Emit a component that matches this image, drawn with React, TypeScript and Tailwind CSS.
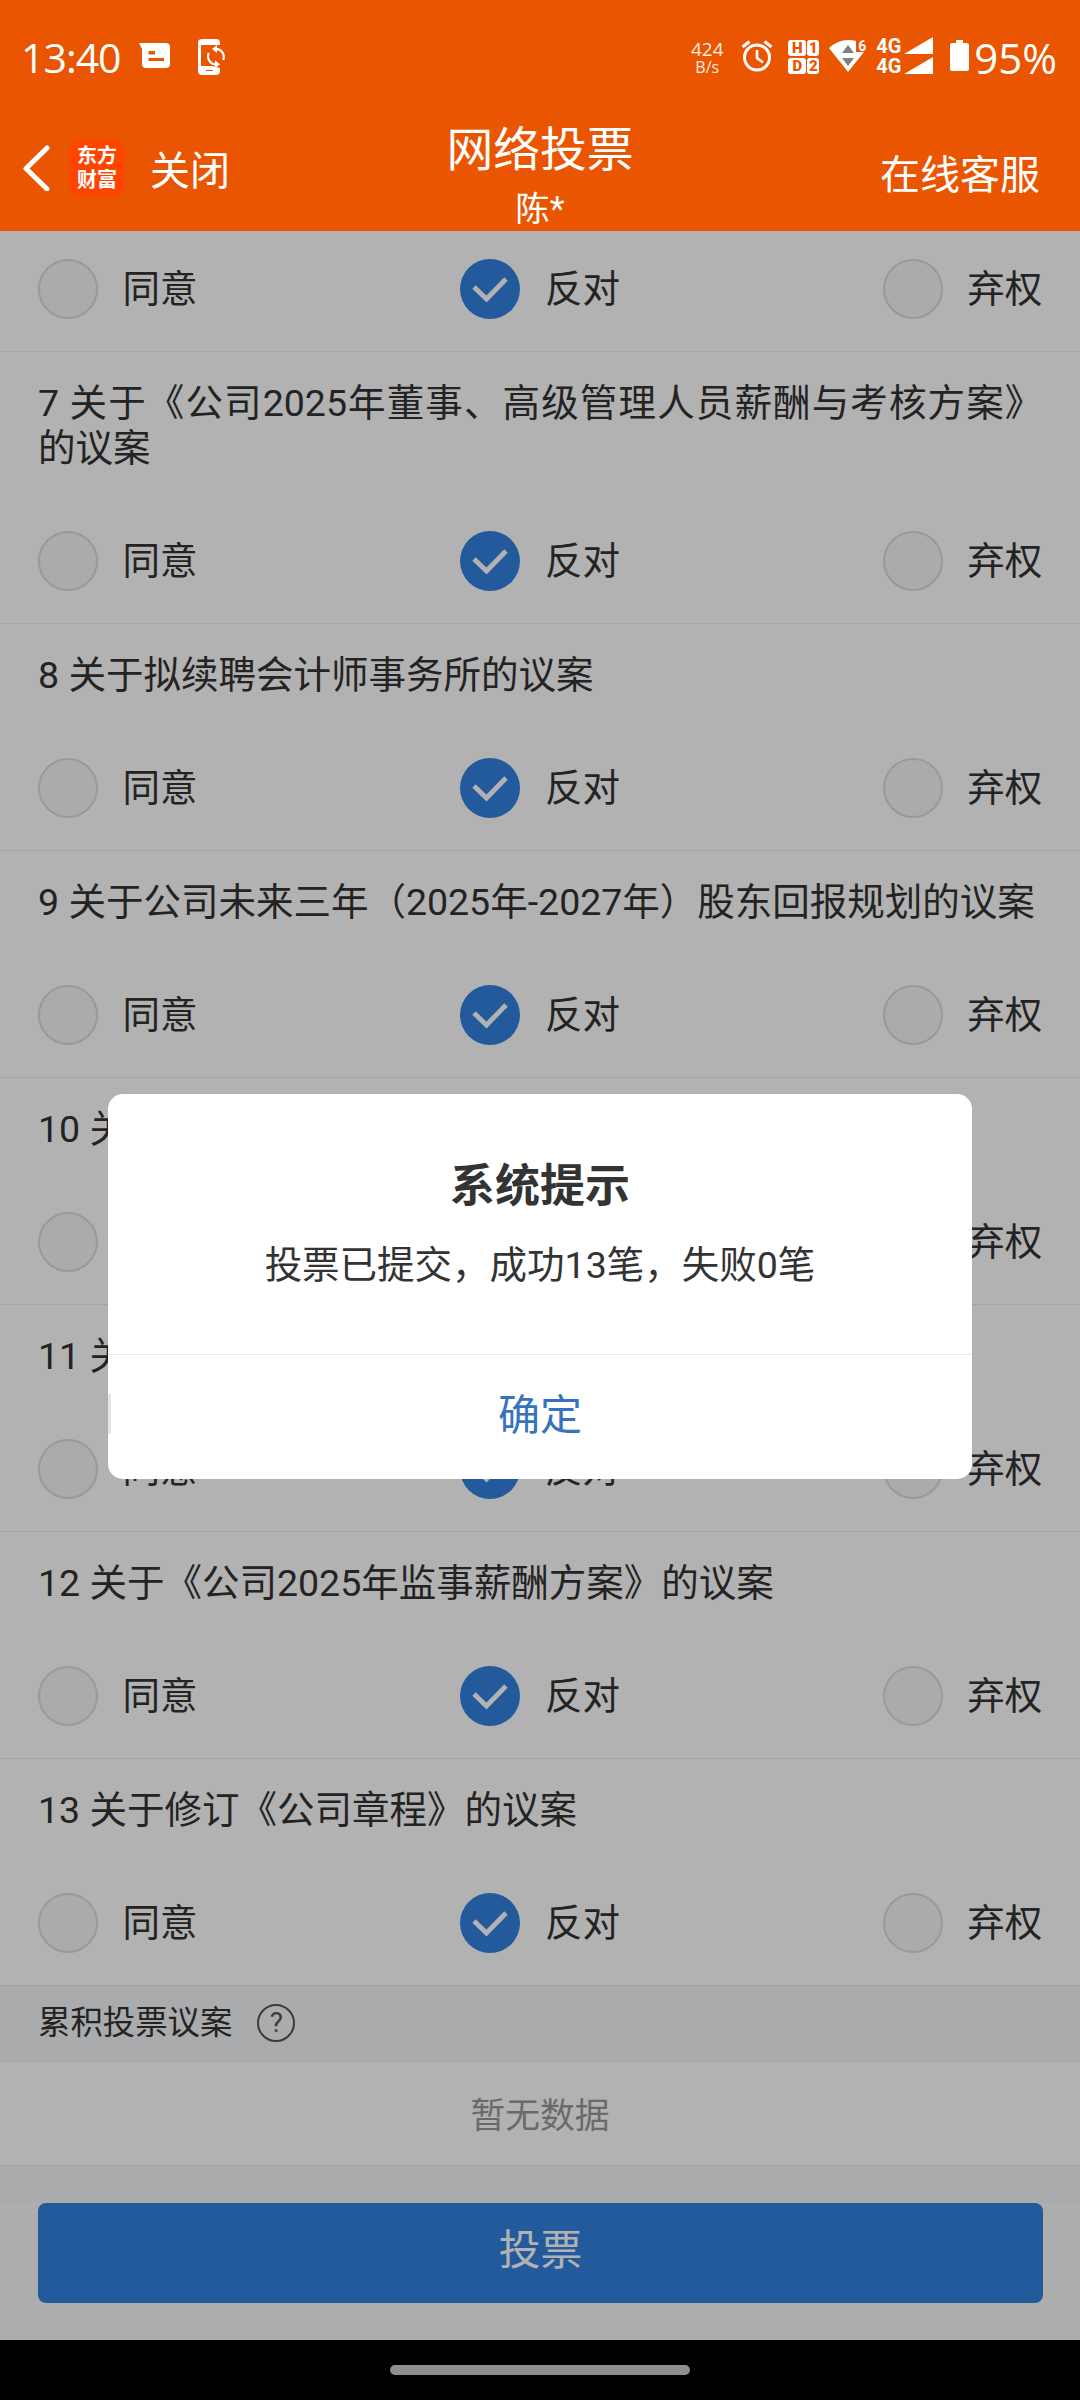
import React, { useState } from 'react';

type Choice = 'agree' | 'against' | 'abstain';

const choices: { key: Choice; label: string }[] = [
  { key: 'agree', label: '同意' },
  { key: 'against', label: '反对' },
  { key: 'abstain', label: '弃权' },
];

const proposals = [
  { id: 7, title: '关于《公司2025年董事、高级管理人员薪酬与考核方案》的议案' },
  { id: 8, title: '关于拟续聘会计师事务所的议案' },
  { id: 9, title: '关于公司未来三年（2025年-2027年）股东回报规划的议案' },
  { id: 10, title: '关于提请股东大会授权的议案' },
  { id: 11, title: '关于制定管理制度的议案' },
  { id: 12, title: '关于《公司2025年监事薪酬方案》的议案' },
  { id: 13, title: '关于修订《公司章程》的议案' },
];

const StatusBar = () => (
  <div className="flex h-[112px] items-center pl-[21px] pr-[23px] text-white">
    <span className="mt-[2px] w-[118px] font-['Open_Sans',sans-serif] text-[41px] leading-none tracking-[-1px]">13:40</span>
    {/* Message */}
    <svg className="h-[26px] w-[31px]" viewBox="0 0 31 26" fill="currentColor">
      <path
        fillRule="evenodd"
        d="M0 0H27Q31 0 31 4V21Q31 25 27 25H7Q3 25 3 21V6ZM9.500 8V11.500H16V8ZM9.500 15V18H25V15Z"
      />
    </svg>
    {/* Phone sync */}
    <svg className="ml-[28px] mt-[2px] h-[36px] w-[28px]" viewBox="0 0 28 36" fill="none">
      <path
        fill="currentColor"
        fillRule="evenodd"
        d="M4 0H18Q22 0 22 4V6H3V27H14L22 29V32Q22 36 18 36H4Q0 36 0 32V4Q0 0 4 0ZM8 31V32H15V31Z"
      />
      <path stroke="currentColor" strokeWidth="2.200" d="M17 10A8 8 0 0 1 25.200 21M19 25.300A8 8 0 0 1 10.800 14" />
      <path fill="currentColor" d="M14 10L19 6V14ZM22 25.300L17 21.300V29.300Z" />
    </svg>
    <div className="ml-auto mt-[3px] flex w-[34px] flex-col items-center font-['Open_Sans',sans-serif] leading-none opacity-90">
      <span className="text-[19px] leading-[19px]">424</span>
      <span className="text-[16px] leading-[16px]">B/s</span>
    </div>
    {/* Alarm */}
    <svg className="ml-[17px] h-[32px] w-[32px]" viewBox="0 0 32 32" fill="none" stroke="currentColor">
      <circle cx="16" cy="17.500" r="12.500" strokeWidth="3" />
      <path strokeWidth="3.200" d="M1.500 7L8.500 1.500M30.500 7L23.500 1.500" />
      <path strokeWidth="2.600" d="M16 10V18L22 22.500" />
    </svg>
    {/* Dual SIM HD */}
    <div className="ml-[15px] mt-[2px] grid grid-cols-[18px_12px] gap-x-px gap-y-[2px] text-center font-['Roboto',sans-serif] text-[15px] font-black leading-[16px] text-[#e95500]">
      <span className="rounded-[3px] bg-white">H</span>
      <span className="rounded-[3px] bg-white">1</span>
      <span className="rounded-[3px] bg-white">D</span>
      <span className="rounded-[3px] bg-white">2</span>
    </div>
    {/* Wifi 6 */}
    <div className="ml-[10px] flex">
      <svg className="h-[33px] w-[29px] overflow-visible" viewBox="0 0 29 33">
        <path fill="#fff" d="M0 8Q9 0 19 0Q24 0 27 1V12H35L19 32Z" />
        <path fill="#808080" d="M19 5L25 13H13ZM19 26L25 18H13Z" />
      </svg>
      <span className="h-[12px] w-[9px] font-['Roboto',sans-serif] text-[14px] font-bold leading-[12px]">6</span>
    </div>
    {/* Signal */}
    <div className="ml-[9px] flex flex-col">
      {[0, 1].map((sim) => (
        <div key={sim} className="flex h-[20px] items-center font-['Roboto',sans-serif] text-[20px] font-bold leading-none">
          <span className="w-[28px]">4G</span>
          <svg className="h-[18px] w-[29px]" viewBox="0 0 29 18" fill="currentColor">
            <path d="M29 0V17H0Z" />
          </svg>
        </div>
      ))}
    </div>
    {/* Battery */}
    <svg className="ml-[17px] h-[32px] w-[20px]" viewBox="0 0 20 32" fill="currentColor">
      <path d="M6 0H13V3H17Q19 3 19 5V29Q19 31 17 31H2Q0 31 0 29V5Q0 3 2 3H6Z" />
    </svg>
    <span className="ml-[4px] mt-[3px] font-['Open_Sans',sans-serif] text-[42px] leading-none">95%</span>
  </div>
);

const Header = () => (
  <div className="grid h-[119px] grid-cols-3 text-white">
    <div className="flex items-start">
      <svg className="ml-[21px] mt-[33px] h-[46px] w-[29px]" viewBox="0 0 29 46" fill="none">
        <path d="M26 3L5 23.500L26 44" stroke="currentColor" strokeWidth="5" strokeLinecap="round" strokeLinejoin="round" />
      </svg>
      <div className="ml-[19px] mt-[28px] flex h-[56px] w-[56px] flex-col items-center justify-center rounded-[13px] bg-[#ff4400] text-[20px] font-bold leading-[24px]">
        <span>东方</span>
        <span>财富</span>
      </div>
      <span className="ml-[25px] mt-[31px] text-[40px] leading-[58px]">关闭</span>
    </div>
    <div className="flex flex-col items-center">
      <h1 className="mt-[5px] text-[46.800px] leading-[66px]">网络投票</h1>
      <span className="mt-[1px] pt-[2px] text-[34.500px] leading-[47px]">陈*</span>
    </div>
    <span className="mt-[35px] pr-[40px] text-right text-[40px] leading-[58px]">在线客服</span>
  </div>
);

const VoteOptions = ({ value, onChange }: { value: Choice; onChange: (c: Choice) => void }) => (
  <div className="flex justify-between">
    {choices.map((c) => (
      <button key={c.key} className="flex h-[60px] items-center gap-[24.600px]" onClick={() => onChange(c.key)}>
        {value === c.key ? (
          <span className="flex h-[60px] w-[60px] items-center justify-center rounded-full bg-[#3381df]">
            <svg className="h-[60px] w-[60px]" viewBox="0 0 60 60" fill="none">
              <path d="M14 28L26.500 40L46 20" stroke="#fff" strokeWidth="4.800" />
            </svg>
          </span>
        ) : (
          <span className="h-[60px] w-[60px] rounded-full border-2 border-[#dcdcdc] bg-[#f5f5f5]" />
        )}
        <span>{c.label}</span>
      </button>
    ))}
  </div>
);

const App = () => {
  const [votes, setVotes] = useState<Record<number, Choice>>({});
  const [showDialog, setShowDialog] = useState(true);

  const vote = (id: number) => (c: Choice) => setVotes({ ...votes, [id]: c });

  return (
    <div className="flex h-[2400px] w-[1080px] flex-col overflow-hidden bg-black font-['Roboto','Noto_Sans_CJK_SC',sans-serif]">
      <div className="h-[231px] bg-[#e95500]">
        <StatusBar />
        <Header />
      </div>

      <div className="relative h-[2109px] bg-[#f8f8f8] text-[37.500px] text-[#333]">
        <div className="border-b border-[#ebebeb] bg-white pb-[32px] pl-[38px] pr-[37.700px] pt-[28px]">
          <VoteOptions value={votes[6] ?? 'against'} onChange={vote(6)} />
        </div>
        {proposals.map((p) => (
          <div key={p.id} className="border-b border-[#ebebeb] bg-white pb-[32px] pl-[38px] pr-[37.700px] pt-[29px]">
            <p className="mb-[60px] text-justify leading-[45px]">
              {p.id} {p.title}
            </p>
            <VoteOptions value={votes[p.id] ?? 'against'} onChange={vote(p.id)} />
          </div>
        ))}

        {/* Cumulative voting */}
        <div className="flex h-[76px] items-center border-b border-[#e8eaed] bg-[#f4f5f7] px-[38px] text-[32.400px]">
          <span>累积投票议案</span>
          <span className="-mt-[2px] ml-[25px] flex h-[38px] w-[38px] items-center justify-center rounded-full border-2 border-[#555] text-[28px] leading-none text-[#555]">
            ?
          </span>
        </div>
        <div className="flex h-[104px] items-center justify-center border-b border-[#ebebeb] bg-white pt-[6px] text-[34.800px] text-[#999]">
          暂无数据
        </div>
        <div className="h-[37px] bg-[#f4f5f7]" />
        <div className="pl-[38px] pr-[37px]">
          <button
            className="h-[100px] w-full rounded-[8px] bg-[#3381df] pb-[3px] text-[41.760px] text-white"
            onClick={() => setShowDialog(true)}
          >
            投票
          </button>
        </div>

        {showDialog && (
          <div className="absolute inset-0 bg-black/30">
            <div className="mx-auto mt-[863px] h-[385px] w-[864px] overflow-hidden rounded-[15px] bg-white text-center">
              <div className="h-[261px] border-b border-[#ebebeb] pt-[63px]">
                <h2 className="text-[45px] font-bold leading-[60px]">系统提示</h2>
                <p className="mt-[22px] leading-[52px]">投票已提交，成功13笔，失败0笔</p>
              </div>
              <button
                className="flex h-[124px] w-full items-center text-[42px] text-[#3573bd]"
                onClick={() => setShowDialog(false)}
              >
                <span className="-mt-[6px] h-[40px] w-[3px] bg-[#e5e5e5]" />
                <span className="-mt-[3px] flex-1 pr-[3px]">确定</span>
              </button>
            </div>
          </div>
        )}
      </div>

      {/* Gesture bar */}
      <div className="flex h-[60px] items-center justify-center">
        <div className="h-[10px] w-[300px] rounded-full bg-[#8e8e8e]" />
      </div>
    </div>
  );
};

export default App;
